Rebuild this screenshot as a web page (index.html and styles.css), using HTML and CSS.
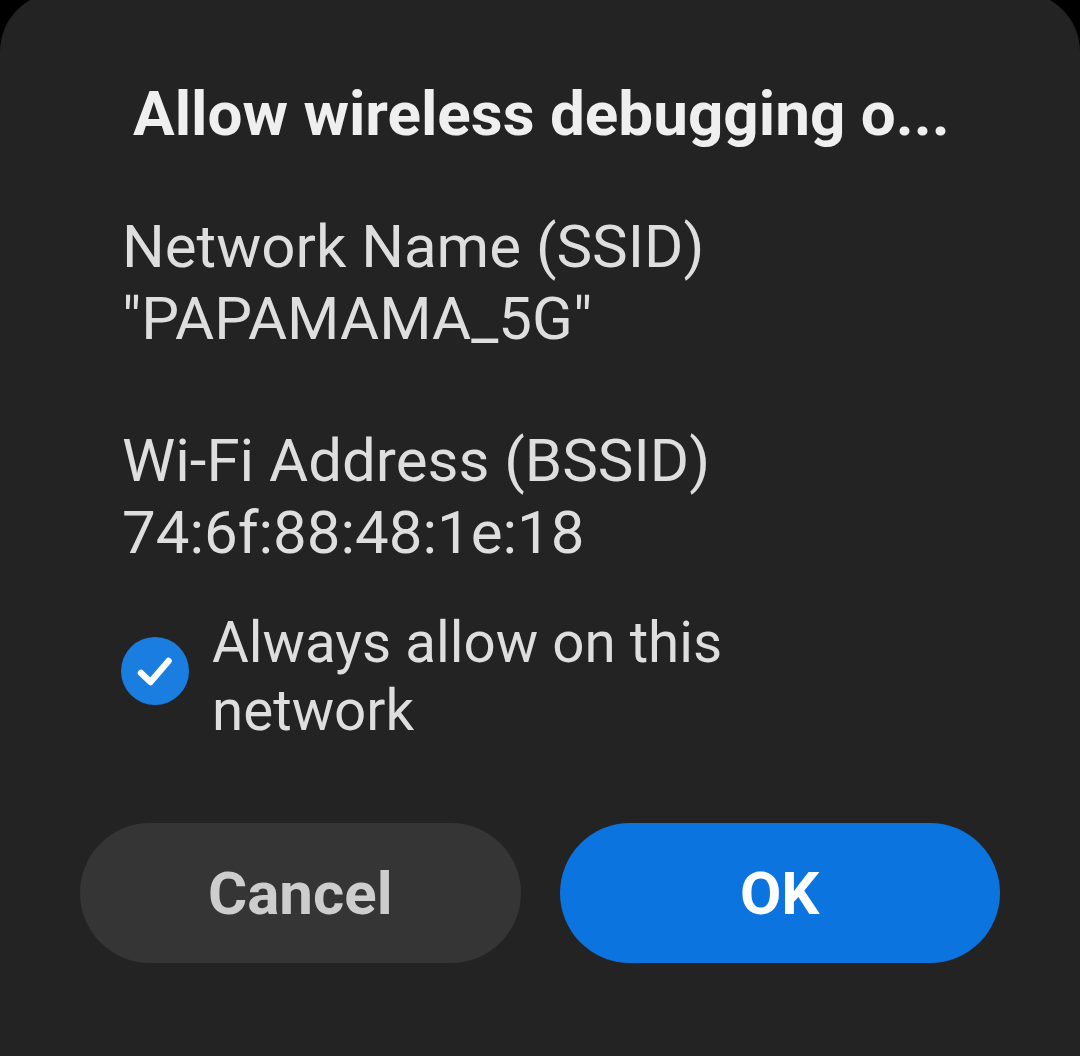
FILE: index.html
```html
<!DOCTYPE html>
<html>
<head>
<meta charset="utf-8">
<link rel="stylesheet" href="styles.css">
</head>
<body>
<div class="dialog">
  <h1 class="title">Allow wireless debugging o...</h1>
  <div class="info">
    <div class="line">Network Name (SSID)</div>
    <div class="line">"PAPAMAMA_5G"</div>
  </div>
  <div class="info info-second">
    <div class="line">Wi-Fi Address (BSSID)</div>
    <div class="line">74:6f:88:48:1e:18</div>
  </div>
  <div class="check-row">
    <span class="check">
      <svg viewBox="0 0 68 68" width="68" height="68">
        <circle cx="34" cy="34" r="34" fill="#1a7ee0"/>
        <path d="M20 36 L29.5 45 L47.5 24" fill="none" stroke="#fff" stroke-width="6.5" stroke-linecap="round" stroke-linejoin="round"/>
      </svg>
    </span>
    <span class="check-label">Always allow on this network</span>
  </div>
  <div class="buttons">
    <button class="btn btn-cancel">Cancel</button>
    <button class="btn btn-ok">OK</button>
  </div>
</div>
</body>
</html>
```

FILE: styles.css
```css
html, body {
  margin: 0;
  padding: 0;
  background: #000;
  width: 1080px;
  height: 1056px;
  overflow: hidden;
}

.dialog {
  box-sizing: border-box;
  margin-top: -8px;
  height: 1064px;
  background: #232323;
  border-radius: 60px 60px 0 0;
  padding: 86px 80px 0 80px;
  font-family: Roboto, "Liberation Sans", sans-serif;
  color: #dedede;
}

.title {
  margin: 0 0 61px 53px;
  font-size: 62px;
  line-height: 72px;
  font-weight: 700;
  color: #efefef;
  white-space: nowrap;
}

.info {
  margin-left: 42px;
  font-size: 60px;
  line-height: 72px;
}

.info-second {
  margin-top: 70px;
}

.check-row {
  margin-top: 40px;
  margin-left: 41px;
  display: flex;
  align-items: center;
  gap: 23px;
}

.check {
  display: flex;
  width: 68px;
  height: 68px;
  margin-bottom: 12px;
}

.check-label {
  width: 540px;
  font-size: 56.5px;
  line-height: 68px;
}

.buttons {
  margin-top: 78px;
  display: flex;
  gap: 39px;
}

.btn {
  flex: 1;
  height: 140px;
  border: none;
  border-radius: 70px;
  font-family: Roboto, "Liberation Sans", sans-serif;
  font-size: 60px;
  font-weight: 700;
  padding: 0;
}

.btn-cancel {
  background: #353535;
  color: #cdcdcd;
}

.btn-ok {
  background: #0b74de;
  color: #ffffff;
}
```
